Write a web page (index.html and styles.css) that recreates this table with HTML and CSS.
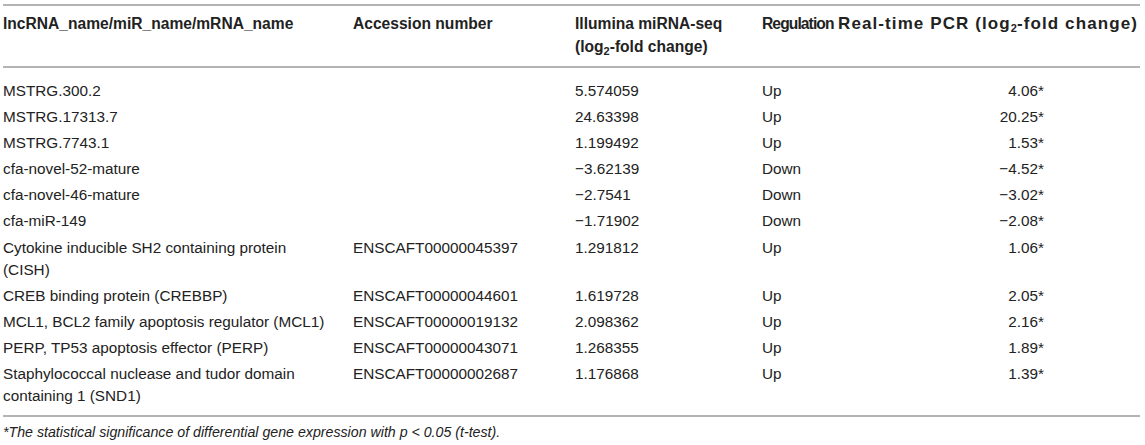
FILE: index.html
```html
<!DOCTYPE html>
<html lang="en">
<head>
<meta charset="utf-8">
<title>Table</title>
<link rel="stylesheet" href="styles.css">
</head>
<body>
<div class="wrap">
  <div class="rule"></div>
  <table class="data">
    <colgroup>
      <col class="c1"><col class="c2"><col class="c3"><col class="c4"><col class="c5">
    </colgroup>
    <thead>
      <tr class="head">
        <th>lncRNA_name/miR_name/mRNA_name</th>
        <th>Accession number</th>
        <th>Illumina miRNA-seq<br>(log<sub>2</sub>-fold change)</th>
        <th class="reg">Regulation</th>
        <th class="pcr">Real-time PCR (log<sub>2</sub>-fold change)</th>
      </tr>
    </thead>
    <tbody>
      <tr class="first"><td>MSTRG.300.2</td><td></td><td>5.574059</td><td>Up</td><td class="num">4.06*</td></tr>
      <tr><td>MSTRG.17313.7</td><td></td><td>24.63398</td><td>Up</td><td class="num">20.25*</td></tr>
      <tr><td>MSTRG.7743.1</td><td></td><td>1.199492</td><td>Up</td><td class="num">1.53*</td></tr>
      <tr><td>cfa-novel-52-mature</td><td></td><td>−3.62139</td><td>Down</td><td class="num">−4.52*</td></tr>
      <tr><td>cfa-novel-46-mature</td><td></td><td>−2.7541</td><td>Down</td><td class="num">−3.02*</td></tr>
      <tr><td>cfa-miR-149</td><td></td><td>−1.71902</td><td>Down</td><td class="num">−2.08*</td></tr>
      <tr><td>Cytokine inducible SH2 containing protein<br>(CISH)</td><td>ENSCAFT00000045397</td><td>1.291812</td><td>Up</td><td class="num">1.06*</td></tr>
      <tr><td>CREB binding protein (CREBBP)</td><td>ENSCAFT00000044601</td><td>1.619728</td><td>Up</td><td class="num">2.05*</td></tr>
      <tr><td>MCL1, BCL2 family apoptosis regulator (MCL1)</td><td>ENSCAFT00000019132</td><td>2.098362</td><td>Up</td><td class="num">2.16*</td></tr>
      <tr><td>PERP, TP53 apoptosis effector (PERP)</td><td>ENSCAFT00000043071</td><td>1.268355</td><td>Up</td><td class="num">1.89*</td></tr>
      <tr class="last"><td>Staphylococcal nuclease and tudor domain<br>containing 1 (SND1)</td><td>ENSCAFT00000002687</td><td>1.176868</td><td>Up</td><td class="num">1.39*</td></tr>
    </tbody>
  </table>
  <p class="note">*The statistical significance of differential gene expression with p &lt; 0.05 (t-test).</p>
</div>
</body>
</html>
```
FILE: styles.css
```css
html, body {
  margin: 0;
  padding: 0;
  background: #ffffff;
}

.wrap {
  width: 1137px;
  padding: 4px 5px 0 3px;
  font-family: "Liberation Sans", Arial, sans-serif;
  color: #222222;
}

.rule {
  height: 2px;
  background-color: #b4b4b4;
}

.data {
  width: 1137px;
  border-collapse: separate;
  border-spacing: 0;
  table-layout: fixed;
  font-size: 15.3px;
}

.c1 { width: 350px; }
.c2 { width: 222px; }
.c3 { width: 187px; }
.c4 { width: 76px; }
.c5 { width: 302px; }

.data th {
  text-align: left;
  font-weight: bold;
  font-size: 15.6px;
  vertical-align: top;
  line-height: 23px;
  padding: 6px 0 8px 0;
  white-space: nowrap;
  border-bottom: 2px solid #b4b4b4;
}

.data th.reg {
  letter-spacing: -0.9px;
}

.data th.pcr {
  font-size: 17px;
  letter-spacing: 1.1px;
}

.data sub {
  font-size: 11px;
  line-height: 0;
  vertical-align: -3px;
  letter-spacing: 0;
}

.data td {
  vertical-align: top;
  line-height: 22px;
  padding: 2px 0 2.1px 0;
}

.data tr.first td {
  padding-top: 12px;
}

.data tr.last td {
  padding-bottom: 8px;
  border-bottom: 2px solid #b4b4b4;
}

.data td.num {
  text-align: right;
  padding-right: 96px;
}

.note {
  margin: 7px 0 0 0;
  font-size: 14.2px;
  font-style: italic;
  line-height: 16px;
}
```
